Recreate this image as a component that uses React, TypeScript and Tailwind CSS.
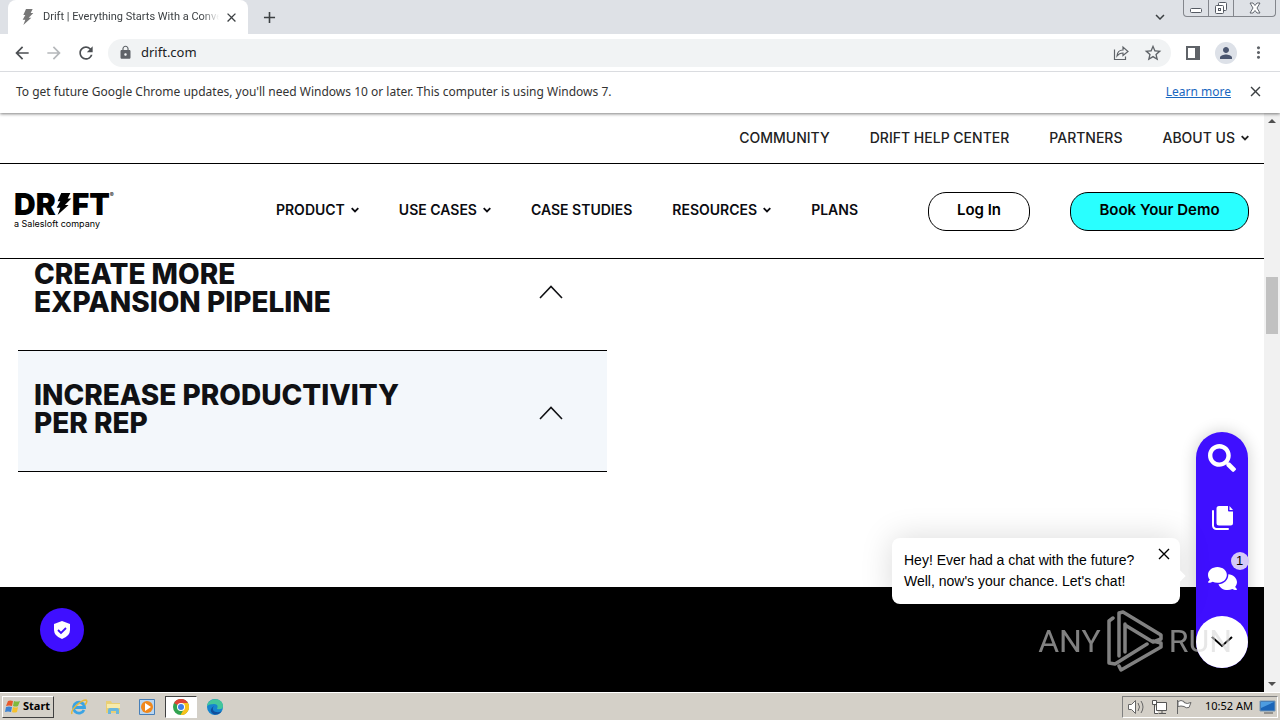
import React from 'react';
import { FaSearch } from 'react-icons/fa';
import { FaComments } from 'react-icons/fa6';
import { MdArrowBack, MdArrowForward, MdRefresh, MdLock, MdStarBorder, MdPerson, MdMoreVert, MdClose, MdAdd, MdExpandMore } from 'react-icons/md';

const TOP_LINKS = [
  { label: 'COMMUNITY' },
  { label: 'DRIFT HELP CENTER' },
  { label: 'PARTNERS' },
  { label: 'ABOUT US', menu: true },
];

const MAIN_LINKS = [
  { label: 'PRODUCT', menu: true },
  { label: 'USE CASES', menu: true },
  { label: 'CASE STUDIES' },
  { label: 'RESOURCES', menu: true },
  { label: 'PLANS' },
];

const BOLT = 'M5 0H15L12 6H16L9 13H13L1 24L4 16H0L4 9H1Z';

const Caret: React.FC = () => (
  <svg className="mt-px h-2 w-2 shrink-0" viewBox="0 0 8 8" fill="none" stroke="currentColor" strokeWidth="1.8">
    <path d="M.7 2.2 4 5.5 7.3 2.2" />
  </svg>
);

const NavLinks: React.FC<{ links: { label: string; menu?: boolean }[]; className: string }> = ({ links, className }) => (
  <ul className={className}>
    {links.map((link) => (
      <li key={link.label}>
        <a href="#" className="flex items-center gap-1.5 whitespace-nowrap">
          {link.label}
          {link.menu && <Caret />}
        </a>
      </li>
    ))}
  </ul>
);

const BrowserChrome: React.FC = () => (
  <div className="relative z-20 shrink-0 font-['Noto_Sans',sans-serif] text-[#3c4043] shadow-[0_1px_3px_rgba(0,0,0,0.5)]">
    <div className="flex h-[34px] items-start bg-[#dee1e6]">
      <div className="ml-2 flex h-[34px] w-60 items-center rounded-t-lg bg-white pr-2 pl-3">
        <svg className="h-4 w-4 shrink-0" viewBox="-1 0 18 24" fill="#777">
          <path d={BOLT} />
        </svg>
        <span className="ml-[7px] w-[176px] overflow-hidden font-['Roboto',sans-serif] text-[11px] whitespace-nowrap [mask-image:linear-gradient(to_right,black_90%,transparent)]">
          Drift | Everything Starts With a Conversation
        </span>
        <button aria-label="Close tab" className="ml-[5px]"><MdClose size={15} /></button>
      </div>
      <button aria-label="New tab" className="mt-2 ml-3"><MdAdd size={19} /></button>
      <div className="ml-auto flex items-start">
        <button aria-label="Search tabs" className="mt-2 mr-3.5"><MdExpandMore size={18} /></button>
        <div className="mr-1 flex h-[17px] rounded-b border border-t-0 border-[#83868c] text-[#555a63]">
          <button aria-label="Minimize" className="flex w-[25px] items-center justify-center border-r border-[#83868c]">
            <svg className="h-4 w-4" viewBox="0 0 16 16" fill="white" stroke="currentColor"><rect x="2.5" y="8.5" width="11" height="4" rx="1" /></svg>
          </button>
          <button aria-label="Restore" className="flex w-[25px] items-center justify-center border-r border-[#83868c]">
            <svg className="h-4 w-4" viewBox="0 0 16 16" fill="white" stroke="currentColor"><rect x="5.5" y="2.5" width="8" height="8" rx="1" /><rect x="2.5" y="5.5" width="8" height="8" rx="1" /><rect x="5.5" y="8.5" width="2" height="2" /></svg>
          </button>
          <button aria-label="Close window" className="flex w-[41px] items-center justify-center">
            <svg className="h-4 w-4" viewBox="0 0 16 16" fill="white" stroke="currentColor" strokeWidth=".9"><path d="M3 3H6L8 5.5 10 3H13L10 8 13 13H10L8 10.500 6 13H3L6 8Z" /></svg>
          </button>
        </div>
      </div>
    </div>

    <div className="flex h-[38px] items-center border-b border-[#dadce0] bg-white px-3 text-[#5f6368]">
      <button aria-label="Back" className="text-[#4c4f53]"><MdArrowBack size={20} /></button>
      <button aria-label="Forward" className="ml-3 text-[#b5b8bb]"><MdArrowForward size={20} /></button>
      <button aria-label="Reload" className="ml-3 text-[#4c4f53]"><MdRefresh size={20} /></button>
      <div className="ml-3 flex h-7 flex-1 items-center rounded-full bg-[#f1f3f4] pr-2 pl-2.5">
        <MdLock size={15} />
        <input aria-label="Address" defaultValue="drift.com" className="ml-2 min-w-0 flex-1 bg-transparent text-[13px] text-[#202124] outline-none" />
        <button aria-label="Share">
          <svg className="h-4 w-4" viewBox="0 0 16 16" fill="none" stroke="currentColor" strokeWidth="1.2"><path d="M1.500 4.500v10h11v-3M4 11c.3-4 2.500-6 6-6V2l5 4.500-5 4V8C7.500 8 5.500 9 4 11Z" /></svg>
        </button>
        <button aria-label="Bookmark" className="ml-[14px]"><MdStarBorder size={20} /></button>
      </div>
      <button aria-label="Side panel" className="ml-3.5">
        <svg className="h-4 w-4" viewBox="0 0 16 16" fill="currentColor"><path d="M1 1h14v14H1zM3 3v10h7V3z" fillRule="evenodd" /></svg>
      </button>
      <button aria-label="Profile" className="ml-3.5 flex h-[22px] w-[22px] items-center justify-center rounded-full bg-[#dde1e8] text-[#4b5670]"><MdPerson size={18} /></button>
      <button aria-label="Menu" className="ml-3"><MdMoreVert size={19} /></button>
    </div>

    <div className="flex h-[41px] items-center bg-white px-4 pb-0.5 text-[12px]">
      <p className="flex-1 text-[#333]">To get future Google Chrome updates, you'll need Windows 10 or later. This computer is using Windows 7.</p>
      <a href="#" className="text-[#1967c0] underline">Learn more</a>
      <button aria-label="Dismiss" className="ml-4"><MdClose size={17} /></button>
    </div>
  </div>
);

const SiteHeader: React.FC = () => (
  <header className="relative z-10 shrink-0 bg-white font-['Inter',sans-serif] text-[#0b0b10]">
    <div className="flex h-[51px] items-center justify-end border-b border-black pr-[15px] pb-0.5">
      <NavLinks links={TOP_LINKS} className="flex gap-10 text-[14px] font-medium text-[#222]" />
    </div>
    <div className="flex h-[95px] items-center border-b border-black pr-[15px] pl-[14px]">
      <a href="#" aria-label="Drift home" className="block text-black">
        <span className="flex h-6 items-center text-[30px] leading-6 font-black">
          DR
          <svg className="h-[22px] w-4" viewBox="0 0 16 24" fill="currentColor"><path d={BOLT} /></svg>
          FT
          <span className="self-start text-[6px] leading-[6px] font-normal">®</span>
        </span>
        <span className="mt-0.5 block text-[9px] leading-3">a Salesloft company</span>
      </a>
      <NavLinks links={MAIN_LINKS} className="mr-[70px] ml-auto flex gap-10 pb-1 text-[14px] font-semibold" />
      <div className="flex gap-10 text-[15px] font-semibold text-black">
        <button className="h-[39px] w-[102px] rounded-[18px] border border-black pb-0.5">Log In</button>
        <button className="h-[39px] w-[179px] rounded-[18px] border border-black bg-[#29ffff] pb-0.5">Book Your Demo</button>
      </div>
    </div>
  </header>
);

const AccordionItem: React.FC<{ title: string; className: string }> = ({ title, className }) => (
  <button aria-label={title} className={`flex h-[121px] w-full items-center border-b border-black pr-11 pl-4 text-left text-[#101114] ${className}`}>
    <h3 className="w-[368px] pb-1 text-[28px] leading-7 font-extrabold">{title}</h3>
    <svg className="mt-1 ml-auto h-3.5 w-6" viewBox="0 0 24 14" fill="none" stroke="currentColor" strokeWidth="1.6"><path d="M1 13 12 1.500 23 13" /></svg>
  </button>
);

const ChatWidget: React.FC = () => (
  <div className="absolute right-4 bottom-6 z-10 flex items-end gap-4">
    <div className="relative mb-16 flex h-[66px] w-72 items-start rounded-lg bg-white pt-3 pr-2 pl-3 font-['Liberation_Sans',sans-serif] shadow-[0_0_32px_rgba(0,0,0,0.15)]">
      <p className="flex-1 text-[14px] leading-[21px] text-black">
        Hey! Ever had a chat with the future?
        <br />
        Well, now's your chance. Let's chat!
      </p>
      <button aria-label="Close message" className="-mt-1">
        <svg className="h-4 w-4" viewBox="0 0 16 16" fill="none" stroke="black" strokeWidth="1.4"><path d="m3 3 10 10M13 3 3 13" /></svg>
      </button>
      <span className="absolute top-[34px] -right-1 h-2 w-2 rotate-45 bg-white" />
    </div>
    <div className="flex h-[236px] w-[52px] flex-col items-center rounded-full bg-[#3f0fff] text-white shadow-[0_0_16px_rgba(0,0,0,0.2)]">
      <button aria-label="Search" className="mt-3"><FaSearch size={28} /></button>
      <button aria-label="Documents" className="mt-8">
        <svg className="h-7 w-7" viewBox="0 0 28 28" fill="currentColor"><path d="M11 2h9v4.500a1 1 0 0 0 1 1h4V19a2.500 2.500 0 0 1-2.500 2.500H11A2.500 2.500 0 0 1 8.500 19V4.500A2.500 2.500 0 0 1 11 2Zm10.500 0 3.500 4h-3.500z" /><path d="M5 7v14.500a3.500 3.500 0 0 0 3.500 3.500H20" fill="none" stroke="currentColor" strokeWidth="2" strokeLinecap="round" /></svg>
      </button>
      <button aria-label="Chat" className="relative mt-8">
        <FaComments size={29} />
        <span className="absolute -top-3 -right-3 flex h-[18px] w-[18px] items-center justify-center rounded-full bg-[#d5c9f8] font-['Liberation_Sans',sans-serif] text-[13px] text-black">1</span>
      </button>
      <button aria-label="Collapse" className="mt-auto flex h-[52px] w-[52px] items-center justify-center rounded-full bg-white text-black">
        <svg className="h-3 w-6" viewBox="0 0 24 12" fill="none" stroke="currentColor" strokeWidth="2"><path d="m2 1 10 9L22 1" /></svg>
      </button>
    </div>
  </div>
);

const Watermark: React.FC = () => (
  <div className="pointer-events-none absolute right-8 bottom-5 z-20 flex h-[62px] items-center font-['Roboto',sans-serif] text-[32px] text-[#d8d8d8] opacity-60">
    <span>ANY</span>
    <svg className="mx-1.5 h-[62px] w-14" viewBox="0 0 56 62" fill="none" stroke="currentColor" strokeWidth="3.5" strokeLinejoin="round" strokeLinecap="round">
      <path d="M6 8 2 11V53L8 54 40 34M18 14V42M12 46V3L16 2 54 25V29L46 32 18 15M12 56 14 60 54 37V33L46 31" />
    </svg>
    <span>RUN</span>
  </div>
);

const Page: React.FC = () => (
  <div className="relative flex min-w-0 flex-1 flex-col overflow-hidden bg-white">
    <SiteHeader />
    <main className="flex min-h-0 flex-1 flex-col font-['Inter',sans-serif]">
      <section className="-mt-[29px] ml-[18px] w-[589px] shrink-0">
        <AccordionItem title="CREATE MORE EXPANSION PIPELINE" className="bg-white" />
        <AccordionItem title="INCREASE PRODUCTIVITY PER REP" className="bg-[#f3f7fb]" />
      </section>
      <section className="mt-[115px] flex-1 bg-black pt-[21px] pl-10">
        <button aria-label="Privacy settings" className="flex h-11 w-11 items-center justify-center rounded-full bg-[#3f0fff]">
          <svg className="h-5 w-5" viewBox="0 0 20 20" fill="none"><path d="M10 1 18 4V10Q18 16 10 19 2 16 2 10V4Z" fill="white" /><path d="m6 10 3 3 5-5" stroke="#3f0fff" strokeWidth="1.8" /></svg>
        </button>
      </section>
    </main>
    <ChatWidget />
    <Watermark />
  </div>
);

const Scrollbar: React.FC = () => (
  <div className="flex w-4 shrink-0 flex-col items-center bg-[#f1f1f1] text-[#505050]">
    <svg className="mt-1 h-2 w-2" viewBox="0 0 8 8" fill="currentColor"><path d="M0 6 4 2l4 4z" /></svg>
    <div className="mt-[152px] h-[57px] w-3 bg-[#c1c1c1]" />
    <svg className="mt-auto mb-1 h-2 w-2" viewBox="0 0 8 8" fill="currentColor"><path d="M0 2l4 4 4-4z" /></svg>
  </div>
);

const Taskbar: React.FC = () => (
  <footer className="flex h-7 shrink-0 items-center border-t border-white bg-[#d4d0c8] px-0.5 font-['Noto_Sans',sans-serif] text-[11px] text-black">
    <button className="flex h-[22px] w-[52px] items-center gap-0.5 border border-t-white border-r-[#404040] border-b-[#404040] border-l-white pl-0.5 text-[11px] font-bold">
      <svg className="h-4 w-4 shrink-0" viewBox="0 0 16 16"><path d="M3 2q2-1 5 0L7 7Q4 6 1 7Z" fill="#e8592b" /><path d="M9 2q3 1 6 0l-2 5Q11 8 8 7Z" fill="#7fb93c" /><path d="M1 8q3-1 6 0l-1 5q-3-1-6 0Z" fill="#3d83d2" /><path d="M8 8q3 1 5 0l-1 5q-3 1-5 0Z" fill="#f6c12c" /></svg>
      Start
    </button>
    <button aria-label="Internet Explorer" className="ml-4">
      <svg className="h-[18px] w-[18px]" viewBox="0 0 18 18" fill="none"><path d="M14 12A5.500 5.500 0 1 1 14.500 9.500H5" stroke="#3ba4e4" strokeWidth="2.800" /><path d="M2 16C0 12 11 2 16 2q2 1-1 5" stroke="#e8b93a" strokeWidth="1.500" /></svg>
    </button>
    <button aria-label="Explorer" className="ml-4">
      <svg className="h-[18px] w-[18px]" viewBox="0 0 18 18"><path d="M2 3h5l1 2h8v10H2Z" fill="#e9cf75" /><path d="M3 6h13v4H3Z" fill="#f8ebaa" /><path d="M4 16v-4q0-2 2-2h7q2 0 2 2v4h-3v-3H7v3Z" fill="#6bb7dc" /></svg>
    </button>
    <button aria-label="Media Player" className="ml-4">
      <svg className="h-[18px] w-[18px]" viewBox="0 0 18 18"><path d="M1.500 1.500h15v15h-15z" fill="#b9d6f1" stroke="#477fb8" /><circle cx="9" cy="9" r="6" fill="#f0881c" /><path d="m7 5 6 4-6 4Z" fill="white" /></svg>
    </button>
    <button aria-label="Chrome" className="ml-[9px] flex h-[22px] w-8 items-center justify-center border border-t-[#404040] border-r-white border-b-white border-l-[#404040] bg-white">
      <svg className="h-4 w-4" viewBox="0 0 16 16"><circle cx="8" cy="8" r="8" fill="#31a350" /><path d="M8 8 1 4A8 8 0 0 1 15 4H8Z" fill="#df4437" /><path d="M8 4h7a8 8 0 0 1-7.500 12L11.500 9Z" fill="#f8c21c" /><circle cx="8" cy="8" r="4" fill="white" /><circle cx="8" cy="8" r="3" fill="#3f7fe8" /></svg>
    </button>
    <button aria-label="Edge" className="ml-[9px]">
      <svg className="h-[18px] w-[18px]" viewBox="0 0 18 18"><circle cx="9" cy="9" r="8" fill="#1685ce" /><path d="M1 8C2-1 17-1 17 8q0 4-6 3 2-5-3-5Q3 6 1 8Z" fill="#43c69b" /><path d="M8 8c-4 5 3 8 8 5q-4 5-9 3-5-4 1-8Z" fill="#124f9d" /></svg>
    </button>
    <div className="ml-auto flex h-[22px] items-center border border-t-[#808080] border-r-white border-b-white border-l-[#808080] pl-1">
      <svg className="h-[18px] w-[18px]" viewBox="0 0 18 18" fill="white" stroke="#666"><path d="M1.500 6.500h3l4-4v13l-4-4h-3Z" /><path d="M11 5q3 4 0 8M14 3q4 6 0 12" fill="none" /></svg>
      <svg className="ml-1.5 h-[18px] w-[18px]" viewBox="0 0 18 18" fill="white" stroke="#555"><path d="M5.500 4.500h10v8h-10zM8 15.500h7M11 12.500v3M1.500 2.500h4v4h-4zM3.500 6.500v9h4" /></svg>
      <svg className="ml-1.5 h-[18px] w-[18px]" viewBox="0 0 18 18" fill="white" stroke="#666"><path d="M2.500 2v14M3 3.500q3-2 6 0v1q3 2 7 0l-2 5q-3 1-5-1-3-1-6 0Z" /></svg>
      <time className="ml-3 whitespace-nowrap">10:52 AM</time>
      <svg className="ml-1.5 h-4 w-[18px]" viewBox="0 0 18 16"><path d="M1 2h15v10H1Z" fill="#1b65b8" stroke="#7797b2" /><path d="M2 3h13L2 9Z" fill="#4d9ce0" /><path d="M5 14h9" stroke="#555" /></svg>
    </div>
  </footer>
);

export default function App() {
  return (
    <div className="flex h-screen flex-col overflow-hidden bg-white">
      <BrowserChrome />
      <div className="flex min-h-0 flex-1">
        <Page />
        <Scrollbar />
      </div>
      <Taskbar />
    </div>
  );
}
